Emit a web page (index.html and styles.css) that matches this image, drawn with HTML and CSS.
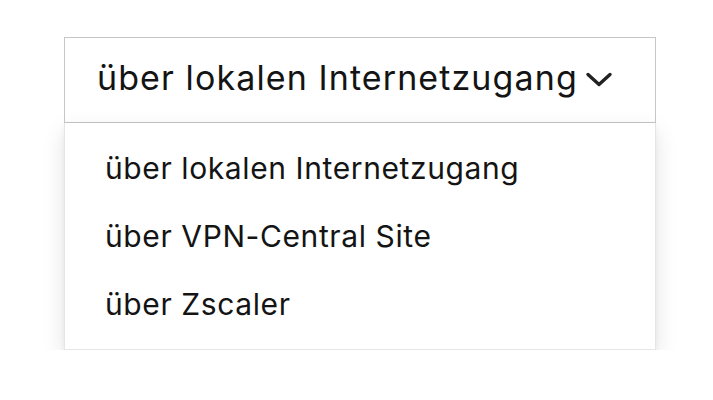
FILE: index.html
```html
<!DOCTYPE html>
<html lang="de">
<head>
<meta charset="utf-8">
<link rel="stylesheet" href="styles.css">
</head>
<body>
<div class="select">
  <div class="select-head">
    <span class="select-value">über lokalen Internetzugang</span>
    <svg class="chevron" width="28" height="18" viewBox="0 0 28 18"><path d="M3 3.5 L14 13.5 L25 3.5" fill="none" stroke="#222" stroke-width="3.4" stroke-linecap="round" stroke-linejoin="round"/></svg>
  </div>
  <ul class="menu">
    <li class="menu-item">über lokalen Internetzugang</li>
    <li class="menu-item">über VPN-Central Site</li>
    <li class="menu-item">über Zscaler</li>
  </ul>
</div>
</body>
</html>
```
FILE: styles.css
```css
html, body {
  margin: 0;
  padding: 0;
  background: #ffffff;
}
body {
  font-family: Inter, "Noto Sans", sans-serif;
  font-optical-sizing: none;
  font-variation-settings: "opsz" 14;
  color: #141414;
  padding: 37px 0 0 64px;
}
.select {
  width: 592px;
}
.select-head {
  box-sizing: border-box;
  height: 86px;
  border: 1.5px solid #c6c6c6;
  display: flex;
  align-items: center;
  padding: 0 0 6px 32px;
  gap: 7px;
  background: #fff;
}
.select-value {
  font-size: 34px;
  letter-spacing: 1.1px;
}
.chevron {
  margin-top: 6px;
}
.menu {
  list-style: none;
  margin: 0;
  padding: 11px 0;
  border: 1px solid #e6e6e6;
  border-top: none;
  box-shadow: 0 8px 22px rgba(0,0,0,0.11), 0 2px 6px rgba(0,0,0,0.05);
  background: #fff;
}
.menu-item {
  height: 68px;
  display: flex;
  align-items: center;
  padding-left: 40px;
  font-size: 30px;
  letter-spacing: 0.6px;
}
```
